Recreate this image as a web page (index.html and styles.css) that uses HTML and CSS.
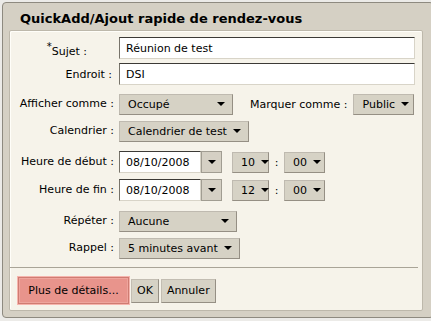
FILE: index.html
```html
<!DOCTYPE html>
<html>

<head>
    <title>QuickAdd</title>
    <link rel="stylesheet" href="styles.css">
</head>

<body>
    <div class="dialog">
        <div class="dialog-title">QuickAdd/Ajout rapide de rendez-vous</div>
        <div class="panel">
            <div class="form">
                <label class="lbl lbl-sujet"><sup>*</sup>Sujet :</label>
                <div class="field"><input class="text wide" type="text" value="Réunion de test"></div>

                <label class="lbl lbl-endroit">Endroit :</label>
                <div class="field"><input class="text wide" type="text" value="DSI"></div>

                <label class="lbl">Afficher comme :</label>
                <div class="field">
                    <span class="select sel-show">Occupé</span>
                    <span class="lbl-inline">Marquer comme :</span>
                    <span class="select sel-public">Public</span>
                </div>

                <label class="lbl">Calendrier :</label>
                <div class="field"><span class="select">Calendrier de test</span></div>

                <label class="lbl">Heure de début :</label>
                <div class="field">
                    <input class="text date" type="text" value="08/10/2008"><span class="drop"></span>
                    <span class="select sel-hour">10</span>
                    <span class="sep">:</span>
                    <span class="select sel-min">00</span>
                </div>

                <label class="lbl">Heure de fin :</label>
                <div class="field">
                    <input class="text date" type="text" value="08/10/2008"><span class="drop"></span>
                    <span class="select sel-hour">12</span>
                    <span class="sep">:</span>
                    <span class="select sel-min">00</span>
                </div>

                <label class="lbl">Répéter :</label>
                <div class="field"><span class="select sel-repeat">Aucune</span></div>

                <label class="lbl">Rappel :</label>
                <div class="field"><span class="select">5 minutes avant</span></div>
            </div>

            <hr>

            <div class="actions">
                <button class="btn btn-more">Plus de détails...</button>
                <button class="btn">OK</button>
                <button class="btn">Annuler</button>
            </div>
        </div>
    </div>
</body>

</html>
```

FILE: styles.css
```css
body {
    margin: 0;
    background-color: #ecebe8;
    font-family: 'DejaVu Sans', sans-serif;
    font-size: 11px;
    color: #000;
}

.dialog {
    margin: 2px 0 0 2px;
    width: 432px;
    height: 316px;
    box-sizing: border-box;
    padding: 0 6px;
    background-color: #d5d0c4;
    border: 1px solid #8e8a80;
    border-radius: 4px;
}

.dialog-title {
    height: 27px;
    line-height: 31px;
    padding-left: 11px;
    font-size: 13px;
    font-weight: bold;
}

.panel {
    width: 414px;
    height: 281px;
    box-sizing: border-box;
    padding: 6px 8px 0 7px;
    background-color: #f6f3ea;
    border: 1px solid #bdb8ab;
    border-radius: 2px;
    box-shadow: inset 1px 1px 0 #fffef9;
}

.form {
    display: grid;
    grid-template-columns: 97px 1fr;
    grid-template-rows: 26px 30px 27px 31px 28px 31px 27px 30px;
    column-gap: 5px;
    align-items: start;
}

.lbl {
    text-align: right;
    white-space: nowrap;
    align-self: start;
    line-height: 21px;
}

.lbl-sujet {
    padding-right: 27px;
    padding-top: 4px;
}

.lbl-sujet sup {
    font-size: 10px;
    line-height: 0;
}

.lbl-endroit {
    padding-right: 2px;
    padding-top: 1px;
}

.field {
    display: flex;
    align-items: center;
    height: 22px;
}

.text {
    box-sizing: border-box;
    height: 22px;
    margin: 0;
    padding: 0 6px;
    font-family: inherit;
    font-size: 11px;
    color: #000;
    background-color: #fff;
    border: 1px solid;
    border-color: #3c3a36 #d8d4c8 #d8d4c8 #77736a;
    border-radius: 0;
}

.wide {
    width: 296px;
}

.date {
    width: 82px;
}

.drop {
    box-sizing: border-box;
    width: 21px;
    height: 22px;
    margin-right: 10px;
    display: flex;
    align-items: center;
    justify-content: center;
    background-color: #d5d0c4;
    border: 1px solid #a19d92;
}

.drop::after,
.select::after {
    content: "";
    border-left: 4px solid transparent;
    border-right: 4px solid transparent;
    border-top: 4px solid #000;
}

.select {
    box-sizing: border-box;
    height: 21px;
    display: inline-flex;
    align-items: center;
    justify-content: space-between;
    gap: 6px;
    padding: 0 7px 0 8px;
    background-color: #d6d2c5;
    border: 1px solid;
    border-color: #bfbab0 #958f84 #958f84 #bfbab0;
    white-space: nowrap;
}

.sel-show {
    width: 114px;
}

.lbl-inline {
    margin: 0 6px 0 17px;
    white-space: nowrap;
}

.sel-public {
    width: 61px;
}

.sel-hour {
    width: 37px;
}

.sep {
    width: 15px;
    text-align: center;
}

.sel-min {
    width: 41px;
}

.sel-repeat {
    width: 118px;
}

hr {
    margin: 0 -4px 0 -7px;
    height: 0;
    border: 0;
    border-top: 1px solid #a9a497;
}

.actions {
    display: flex;
    align-items: center;
    gap: 2px;
    margin-top: 9px;
    padding-left: 1px;
}

.btn {
    box-sizing: border-box;
    height: 24px;
    margin: 0;
    padding: 0 5px;
    font-family: inherit;
    font-size: 11px;
    color: #000;
    background-color: #d6d2c5;
    border: 1px solid;
    border-color: #c2bdb2 #958f84 #958f84 #c2bdb2;
    border-radius: 0;
}

.btn-more {
    width: 111px;
    height: 27px;
    background-color: #e8948c;
    border: 1px solid #cf7c72;
    box-shadow: inset 0 0 0 1px #eea59d;
    outline: 1px solid #f6b4ad;
    outline-offset: 0;
}
```
